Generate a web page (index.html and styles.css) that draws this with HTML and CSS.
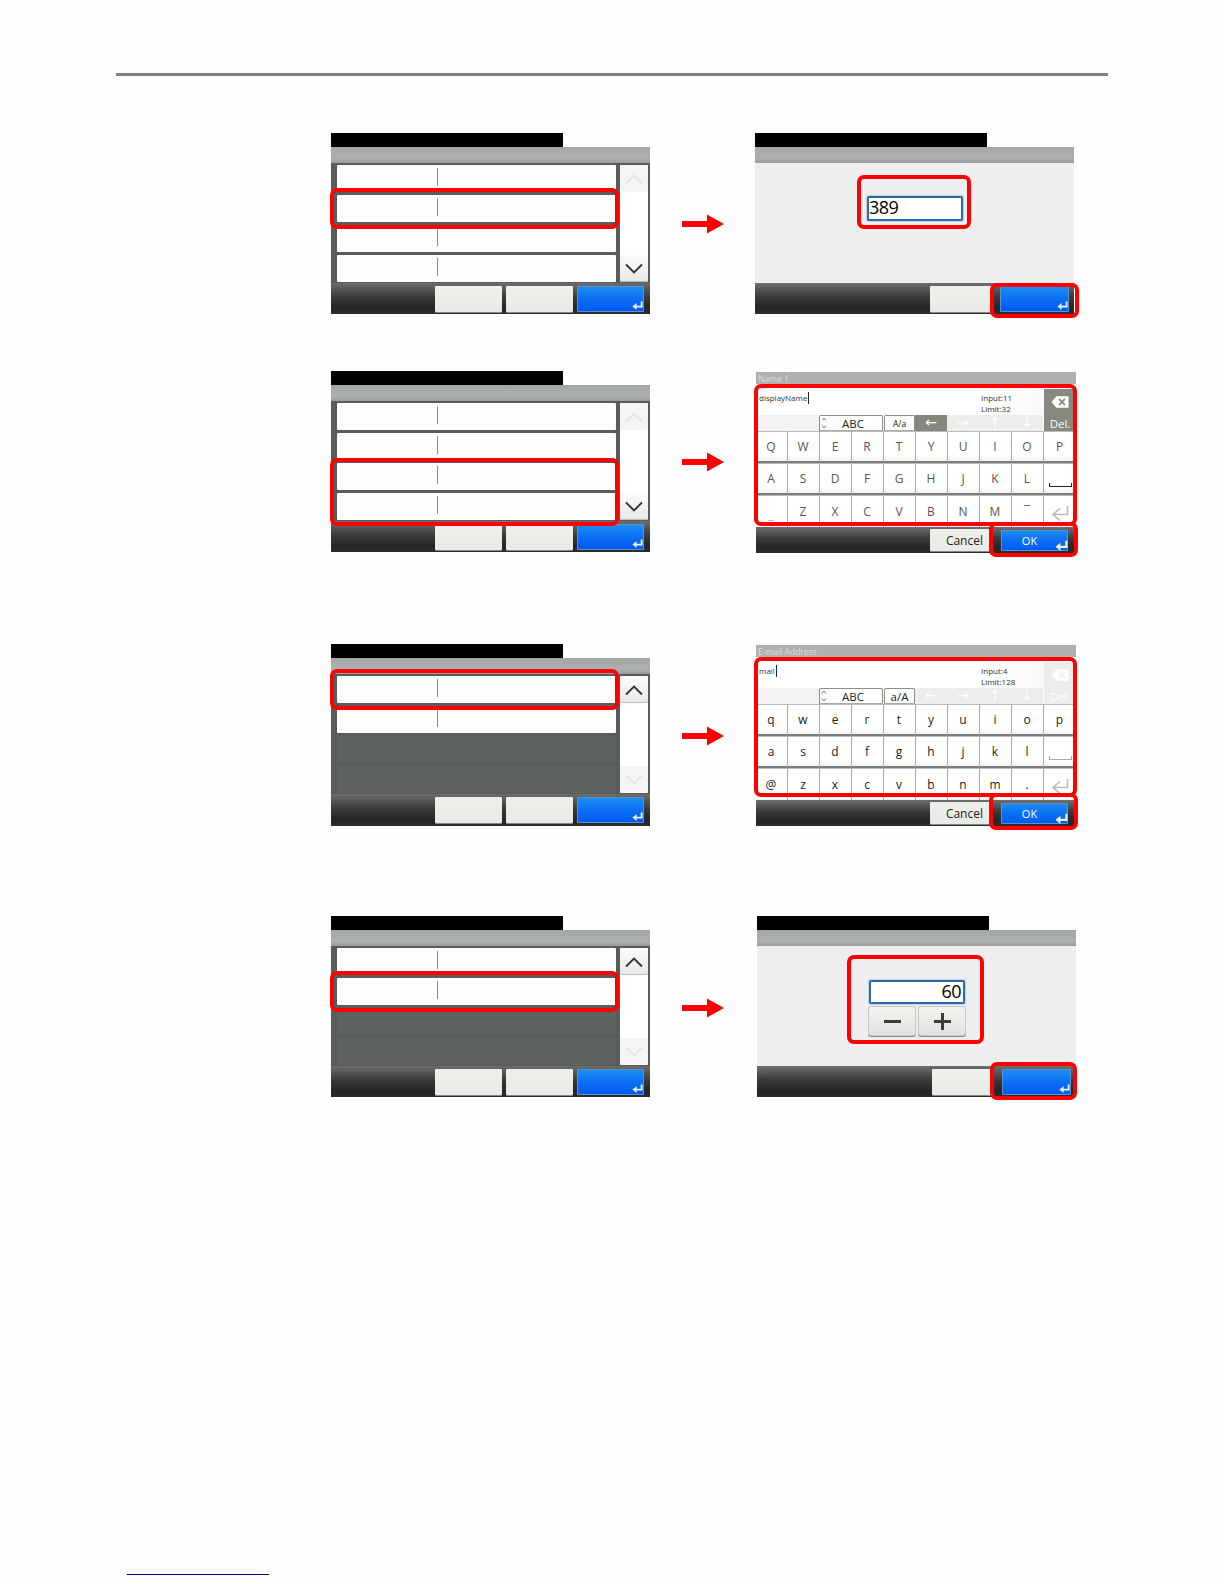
FILE: index.html
```html
<!DOCTYPE html>
<html lang="en">
<head>
<meta charset="utf-8">
<title>Manual page</title>
<link rel="stylesheet" href="styles.css">
</head>
<body>
<svg class="defs" width="0" height="0" aria-hidden="true">
  <symbol id="ret" viewBox="0 0 12 12"><path d="M10.5 1.5V7.2H4" fill="none" stroke="currentColor" stroke-width="2"/><path d="M0.5 7.2L5 3.4V11Z" fill="currentColor"/></symbol>
  <symbol id="up" viewBox="0 0 20 12"><path d="M2 10.5L10 2.5L18 10.5" fill="none" stroke="currentColor" stroke-width="1.8"/></symbol>
  <symbol id="down" viewBox="0 0 20 12"><path d="M2 1.5L10 9.5L18 1.5" fill="none" stroke="currentColor" stroke-width="1.8"/></symbol>
  <symbol id="arrow" viewBox="0 0 42 20"><path d="M0 7H25V0.5L42 10L25 19.5V13H0Z" fill="currentColor"/></symbol>
  <symbol id="updown" viewBox="0 0 6 14"><path d="M1 4.5L3 2L5 4.5M1 9.5L3 12L5 9.5" fill="none" stroke="currentColor" stroke-width="0.8"/></symbol>
  <symbol id="del" viewBox="0 0 20 14"><path d="M6 0.5H19.5V13.5H6L0.5 7Z" fill="currentColor"/><path d="M9 3.5L15.5 10.5M15.5 3.5L9 10.5" fill="none" stroke="var(--x)" stroke-width="2"/></symbol>
  <symbol id="enter" viewBox="0 0 18 16"><path d="M16.5 1V9.5H3" fill="none" stroke="currentColor" stroke-width="1.6"/><path d="M9 3.5L2 9.5L9 15.5" fill="none" stroke="currentColor" stroke-width="1.6"/></symbol>
</svg>

<main class="page">
  <div class="rule"></div>

  <section class="figures">

    <div class="fig">
      <div class="screen">
        <div class="title"></div><div class="head"></div>
        <div class="body list">
          <div class="rows">
            <div class="row"><i class="sep"></i></div>
            <div class="row"><i class="sep"></i></div>
            <div class="row"><i class="sep"></i></div>
            <div class="row"><i class="sep"></i></div>
          </div>
          <div class="scroll">
            <div class="sbtn off"><svg class="chev"><use href="#up"/></svg></div>
            <div class="sbtn"><svg class="chev"><use href="#down"/></svg></div>
          </div>
        </div>
        <div class="foot">
          <div class="btn wide"></div><div class="btn wide"></div>
          <div class="btn blue wide"><svg class="ret"><use href="#ret"/></svg></div>
        </div>
        <div class="red r-row1"></div>
      </div>
      <svg class="go"><use href="#arrow"/></svg>
      <div class="screen">
        <div class="title"></div><div class="head"></div>
        <div class="body plain">
          <div class="field field-left">389</div>
        </div>
        <div class="foot foot-num">
          <div class="btn cancel"></div>
          <div class="btn blue ok"><svg class="ret"><use href="#ret"/></svg></div>
        </div>
        <div class="red r-input1"></div>
        <div class="red r-ok1"></div>
      </div>
    </div>

    <div class="fig fig-b">
      <div class="screen">
        <div class="title"></div><div class="head"></div>
        <div class="body list">
          <div class="rows">
            <div class="row"><i class="sep"></i></div>
            <div class="row"><i class="sep"></i></div>
            <div class="row"><i class="sep"></i></div>
            <div class="row"><i class="sep"></i></div>
          </div>
          <div class="scroll">
            <div class="sbtn off"><svg class="chev"><use href="#up"/></svg></div>
            <div class="sbtn"><svg class="chev"><use href="#down"/></svg></div>
          </div>
        </div>
        <div class="foot">
          <div class="btn wide"></div><div class="btn wide"></div>
          <div class="btn blue wide"><svg class="ret"><use href="#ret"/></svg></div>
        </div>
        <div class="red r-row2"></div>
      </div>
      <svg class="go"><use href="#arrow"/></svg>
      <div class="screen kb kb-shift">
        <div class="kb-head">Name 1</div>
        <div class="kb-top">
          <div class="kb-main">
            <div class="entry">
              <span class="typed">displayName</span>
              <span class="count">Input:11<br>Limit:32</span>
            </div>
            <div class="tools">
              <div class="tool abc"><svg class="ud"><use href="#updown"/></svg>ABC</div>
              <div class="tool case">A/a</div>
              <div class="nav on">←</div><div class="nav">→</div><div class="nav">↑</div><div class="nav">↓</div>
            </div>
          </div>
          <div class="delkey on"><svg class="delicon"><use href="#del"/></svg><span>Del.</span></div>
        </div>
        <div class="keys upper">
          <div class="key">Q</div><div class="key">W</div><div class="key">E</div><div class="key">R</div><div class="key">T</div><div class="key">Y</div><div class="key">U</div><div class="key">I</div><div class="key">O</div><div class="key">P</div>
          <div class="key">A</div><div class="key">S</div><div class="key">D</div><div class="key">F</div><div class="key">G</div><div class="key">H</div><div class="key">J</div><div class="key">K</div><div class="key">L</div><div class="key space dark"></div>
          <div class="key soft">_</div><div class="key">Z</div><div class="key">X</div><div class="key">C</div><div class="key">V</div><div class="key">B</div><div class="key">N</div><div class="key">M</div><div class="key">¯</div><div class="key"><svg class="enter"><use href="#enter"/></svg></div>
        </div>
        <div class="foot foot-kb">
          <div class="btn kcancel">Cancel</div>
          <div class="btn blue kok">OK<svg class="ret"><use href="#ret"/></svg></div>
        </div>
        <div class="red r-kb"></div>
        <div class="red r-kok"></div>
      </div>
    </div>

    <div class="fig fig-c">
      <div class="screen">
        <div class="title"></div><div class="head"></div>
        <div class="body list">
          <div class="rows">
            <div class="row"><i class="sep"></i></div>
            <div class="row"><i class="sep"></i></div>
            <div class="row none"></div>
            <div class="row none"></div>
          </div>
          <div class="scroll">
            <div class="sbtn"><svg class="chev"><use href="#up"/></svg></div>
            <div class="sbtn off"><svg class="chev"><use href="#down"/></svg></div>
          </div>
        </div>
        <div class="foot">
          <div class="btn wide"></div><div class="btn wide"></div>
          <div class="btn blue wide"><svg class="ret"><use href="#ret"/></svg></div>
        </div>
        <div class="red r-row3"></div>
      </div>
      <svg class="go"><use href="#arrow"/></svg>
      <div class="screen kb">
        <div class="kb-head">E-mail Address</div>
        <div class="kb-top">
          <div class="kb-main">
            <div class="entry">
              <span class="typed">mail</span>
              <span class="count">Input:4<br>Limit:128</span>
            </div>
            <div class="tools">
              <div class="tool abc"><svg class="ud"><use href="#updown"/></svg>ABC</div>
              <div class="tool case big">a/A</div>
              <div class="nav">←</div><div class="nav">→</div><div class="nav">↑</div><div class="nav">↓</div>
            </div>
          </div>
          <div class="delkey"><svg class="delicon"><use href="#del"/></svg><span>Del.</span></div>
        </div>
        <div class="keys">
          <div class="key">q</div><div class="key">w</div><div class="key">e</div><div class="key">r</div><div class="key">t</div><div class="key">y</div><div class="key">u</div><div class="key">i</div><div class="key">o</div><div class="key">p</div>
          <div class="key">a</div><div class="key">s</div><div class="key">d</div><div class="key">f</div><div class="key">g</div><div class="key">h</div><div class="key">j</div><div class="key">k</div><div class="key">l</div><div class="key space"></div>
          <div class="key">@</div><div class="key">z</div><div class="key">x</div><div class="key">c</div><div class="key">v</div><div class="key">b</div><div class="key">n</div><div class="key">m</div><div class="key">.</div><div class="key"><svg class="enter"><use href="#enter"/></svg></div>
        </div>
        <div class="foot foot-kb">
          <div class="btn kcancel">Cancel</div>
          <div class="btn blue kok">OK<svg class="ret"><use href="#ret"/></svg></div>
        </div>
        <div class="red r-kb3"></div>
        <div class="red r-kok3"></div>
      </div>
    </div>

    <div class="fig fig-d">
      <div class="screen">
        <div class="title"></div><div class="head"></div>
        <div class="body list">
          <div class="rows">
            <div class="row"><i class="sep"></i></div>
            <div class="row"><i class="sep"></i></div>
            <div class="row none"></div>
            <div class="row none"></div>
          </div>
          <div class="scroll">
            <div class="sbtn"><svg class="chev"><use href="#up"/></svg></div>
            <div class="sbtn off"><svg class="chev"><use href="#down"/></svg></div>
          </div>
        </div>
        <div class="foot">
          <div class="btn wide"></div><div class="btn wide"></div>
          <div class="btn blue wide"><svg class="ret"><use href="#ret"/></svg></div>
        </div>
        <div class="red r-row1"></div>
      </div>
      <svg class="go"><use href="#arrow"/></svg>
      <div class="screen">
        <div class="title"></div><div class="head"></div>
        <div class="body plain plain-num">
          <div class="field field-right">60</div>
          <div class="stepper">
            <div class="step"><i class="minus"></i></div>
            <div class="step"><i class="minus"></i><i class="vbar"></i></div>
          </div>
        </div>
        <div class="foot foot-num">
          <div class="btn cancel"></div>
          <div class="btn blue ok"><svg class="ret"><use href="#ret"/></svg></div>
        </div>
        <div class="red r-input4"></div>
        <div class="red r-ok4"></div>
      </div>
    </div>

  </section>

  <a class="bottom-link" href="#" aria-label="Back to contents"></a>
</main>
</body>
</html>
```

FILE: styles.css
```css
* { box-sizing: border-box; }
html, body { margin: 0; padding: 0; background: #fefefe; }
body { font-family: "Open Sans", "Noto Sans", sans-serif; color: #333; }
.defs { position: absolute; }

.page { width: 1224px; height: 1584px; padding-top: 73px; overflow: hidden; }
.rule { width: 992px; height: 3px; margin-left: 116px; background: #808080; }

.figures { margin: 57px 0 0 331px; }
.fig { display: flex; height: 181px; }
.fig-b { margin-top: 57px; }
.fig-c { margin-top: 92px; height: 182px; }
.fig-d { margin-top: 90px; }

.go { width: 42px; height: 20px; margin: 0 31px 0 32px; align-self: center; color: #f00; flex: none; }
.fig-b .go { margin-right: 32px; }
.fig-c .go { margin-top: 1px; margin-right: 32px; }
.fig-d .go { margin-top: 3px; margin-right: 33px; }
.fig-b .kb, .fig-c .kb { margin-top: 1px; }

.screen { position: relative; width: 319px; height: 181px; flex: none; display: flex; flex-direction: column; }
.fig-c .screen:first-child { height: 182px; }
.fig-c .screen:first-child .foot { height: 32px; }
.title { width: 232px; height: 14px; background: #000; flex: none; }
.head { height: 16px; flex: none; background: linear-gradient(#a2a6a6, #aeb1b1 70%, #989c9c); }
.body { height: 120px; flex: none; }

.list { display: flex; background: #585c5a; padding: 2px 2px 0 6px; gap: 4px; }
.rows { width: 279px; display: flex; flex-direction: column; gap: 3px; }
.row { height: 27px; background: #fdfdfb; border-radius: 1px; display: flex; align-items: center; padding-left: 100px; }
.row.none { background: #5f6360; }
.sep { display: block; width: 1px; height: 18px; margin-bottom: 4px; background: #8a8a8a; }
.scroll { width: 28px; height: 117px; background: #fff; display: flex; flex-direction: column; justify-content: space-between; border-radius: 1px; }
.sbtn { height: 27px; background: linear-gradient(#fbfbf9, #e9eae6); display: flex; align-items: center; justify-content: center; color: #333; border-radius: 2px; box-shadow: inset 0 -1px 0 #bbb; }
.sbtn.off { color: #e3e7e3; background: #f5f6f3; box-shadow: none; }
.chev { width: 20px; height: 12px; }

.foot { height: 31px; flex: none; display: flex; justify-content: flex-end; padding: 3px 6px 2px 0; gap: 4px; background: linear-gradient(#6e6e6e, #3a3a3a 45%, #252525 80%, #2c2c2c); }
.btn { height: 26px; background: linear-gradient(#eef0ec, #e8eae5); border-radius: 1px; box-shadow: 0 1px 0 #888; font-size: 12px; color: #222; display: flex; align-items: center; justify-content: center; }
.btn.wide { width: 67px; }
.blue { background: linear-gradient(#1f8fee, #0a6cf5 55%, #0058f0); color: #fff; position: relative; box-shadow: 0 0 0 1px #5a93c8 inset; }
.ret { position: absolute; right: 1px; bottom: 1px; width: 11px; height: 11px; color: #eaf4ff; }

.plain { background: #eeeeee; padding: 33px 0 0 112px; }
.plain-num { padding-top: 34px; }
.field { width: 96px; height: 25px; background: #fff; border: 2px solid #2b6cb0; border-radius: 2px; box-shadow: 0 0 0 1px #c4d2de; font-size: 18px; line-height: 18px; color: #000; letter-spacing: -0.6px; }
.field-right { text-align: right; padding-right: 2px; height: 24px; }
.stepper { display: flex; gap: 4px; margin-top: 3px; }
.step { position: relative; width: 46px; height: 28px; background: linear-gradient(#f3f3f1, #e2e2de); border-radius: 2px; box-shadow: 0 0 0 1px #c6c6c2, 0 1px 0 1px #8a8a8a; display: flex; align-items: center; justify-content: center; }
.minus { display: block; width: 17px; height: 3px; background: #3c3c3c; }
.vbar { position: absolute; left: 21.5px; top: 6px; width: 3px; height: 17px; background: #3c3c3c; }

.foot-num { gap: 8px; padding-right: 5px; }
.btn.cancel { width: 62px; }
.btn.ok { width: 69px; }

.kb { width: 320px; background: #fff; }
.kb-head { height: 12px; flex: none; background: #aeb1b1; color: #dedede; font-size: 8.5px; line-height: 11px; padding: 1px 0 0 2px; white-space: nowrap; }
.kb-top { display: flex; height: 47px; flex: none; }
.kb-main { width: 288px; display: flex; flex-direction: column; }
.entry { height: 31px; position: relative; flex: none; background: linear-gradient(90deg, #fff 75%, #fbf8fb); font-size: 8px; line-height: 12px; color: #333; padding: 8px 0 0 3px; }
.typed { display: inline-block; border-right: 1px solid #222; padding-right: 1px; }
.count { position: absolute; left: 225px; top: 8px; font-size: 8px; line-height: 11px; }
.tools { height: 16px; display: flex; padding-left: 63px; background: linear-gradient(90deg, #f3f1f2 63px, #fff 63px); }
.tool { height: 16px; background: #fff; border: 1px solid #8c8c8c; border-bottom-color: #aaa; border-radius: 2px 2px 0 0; display: flex; align-items: center; justify-content: center; font-size: 11.5px; color: #222; position: relative; padding-left: 4px; }
.abc { width: 64px; }
.ud { position: absolute; left: 1px; top: 0; width: 6px; height: 14px; color: #555; }
.case { width: 31px; margin-left: 1px; font-size: 8.5px; padding-left: 0; }
.case.big { font-size: 11.5px; }
.nav { width: 32px; height: 16px; background: #eceeec; color: #fff; font-family: "DejaVu Sans", sans-serif; font-size: 14px; line-height: 15px; text-align: center; }
.nav.on { background: #85867e; }
.delkey { width: 32px; margin-top: 5px; height: 42px; background: #eceeec; color: #fff; display: flex; flex-direction: column; align-items: center; font-size: 11.5px; line-height: 13px; --x: #eceeec; padding-top: 6px; gap: 8px; }
.delkey.on { background: #87887f; --x: #87887f; }
.delicon { width: 18px; height: 14px; flex: none; }

.keys { height: 96px; flex: none; display: grid; grid-template-columns: repeat(10, 32px); grid-template-rows: repeat(3, 32px); }
.key { background: linear-gradient(#fff 80%, #f2f2f2); border-right: 1px solid #a9a9a9; border-bottom: 2px solid #7b7b7b; border-top: 1px solid #bbb; display: flex; align-items: center; justify-content: center; font-size: 12px; color: #222; padding: 0 1px 0 0; }
.key:nth-child(10n) { border-right: 0; }
.key:nth-child(n+21) { border-bottom: 0; }
.upper .key { color: #555; }
.upper .soft { color: #aaa; align-items: flex-end; padding-bottom: 6px; line-height: 12px; }
.space { position: relative; }
.space::after { content: ""; position: absolute; left: 5px; right: 4px; bottom: 6px; height: 3px; border: 1px solid #aaa; border-top: 0; }
.space.dark::after { border-color: #222; }
.enter { width: 18px; height: 16px; color: #b8b8b8; margin-top: 3px; }

.foot-kb { height: 26px; padding: 2px 8px 2px 0; gap: 9px; }
.btn.kcancel { width: 62px; height: 22px; justify-content: flex-end; padding-right: 9px; font-size: 12px; }
.btn.kok { width: 67px; height: 21px; margin-top: 1px; font-size: 11px; padding-right: 10px; }
.kok .ret { right: 0; bottom: -1px; width: 13px; height: 13px; }

.red { position: absolute; border: 4px solid #f00; border-radius: 7px; pointer-events: none; }
.r-row1 { left: -1px; top: 55px; width: 289px; height: 41px; }
.r-row2 { left: -1px; top: 87px; width: 289px; height: 68px; }
.r-row3 { left: -1px; top: 25px; width: 289px; height: 41px; }
.r-input1 { left: 102px; top: 42px; width: 114px; height: 54px; }
.r-ok1 { left: 235px; top: 150px; width: 89px; height: 35px; }
.r-kb { left: -2px; top: 12px; width: 323px; height: 142px; }
.r-kok { left: 233px; top: 150px; width: 89px; height: 35px; }
.r-kb3 { left: -2px; top: 12px; width: 323px; height: 140px; }
.r-kok3 { left: 233px; top: 148px; width: 89px; height: 37px; }
.r-input4 { left: 90px; top: 39px; width: 137px; height: 89px; }
.r-ok4 { left: 233px; top: 146px; width: 87px; height: 38px; }

.bottom-link { display: block; width: 142px; height: 1px; margin: 477px 0 0 127px; background: #000080; }
```
